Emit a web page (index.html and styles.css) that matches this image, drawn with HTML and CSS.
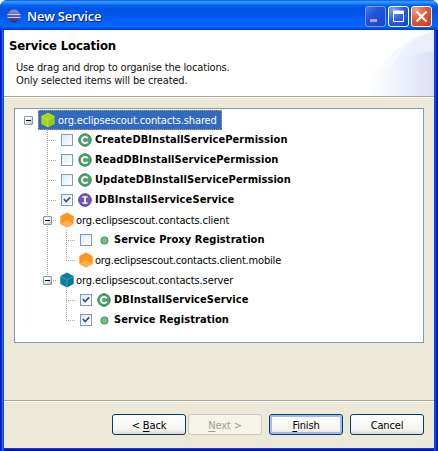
FILE: index.html
```html
<!DOCTYPE html>
<html lang="en">
<head>
<meta charset="utf-8">
<title>New Service</title>
<link rel="stylesheet" href="styles.css">
</head>
<body>
<svg width="0" height="0" class="defs">
  <defs>
    <linearGradient id="orb" x2="0" y2="1"><stop stop-color="#9990cc"/><stop offset="1" stop-color="#332776"/></linearGradient>
    <linearGradient id="swoosh"><stop stop-color="#fff"/><stop offset="1" stop-color="#edf1fb"/></linearGradient>
    <linearGradient id="swoosh2"><stop stop-color="#fff"/><stop offset=".4" stop-color="#f2f5fc"/><stop offset="1" stop-color="#dbe2f6"/></linearGradient>
    <symbol id="hex" viewBox="0 0 14 16">
      <path d="M7 .5 13.700 4v8L7 15.500.3 12V4z" fill="currentColor"/>
      <path d="M7 8 13.700 4v8L7 15.500z" fill="#000" opacity=".07"/>
      <path d="M.5 4.200 7 8l6.500-3.800M7 8v7" fill="none" stroke="#fff" stroke-width=".7" opacity=".38"/>
    </symbol>
    <symbol id="hexo" viewBox="0 0 14 16">
      <path d="M7 .5 13.700 4v8L7 15.500.3 12V4z" fill="#fb971c"/>
      <path d="M1 11.500 7 8l6 3.500L7 15z" fill="#ffb960" opacity=".8"/>
    </symbol>
    <symbol id="cls" viewBox="0 0 14 14">
      <circle cx="7" cy="7" r="6.200" fill="#4fa56a" stroke="#2f7f4c"/>
      <path d="M9.600 5.300A3.100 3.100 0 1 0 9.600 8.700" fill="none" stroke="#fff" stroke-width="1.900"/>
    </symbol>
    <symbol id="ifc" viewBox="0 0 14 14">
      <circle cx="7" cy="7" r="6.300" fill="#7456b0" stroke="#583b98"/>
      <path d="M4.500 4h5M4.500 10h5M7 4v6" fill="none" stroke="#fff" stroke-width="1.700"/>
    </symbol>
    <symbol id="dot" viewBox="0 0 14 14"><circle cx="7.500" cy="7.500" r="3.600" fill="#73bd83" stroke="#3e8a56"/></symbol>
    <symbol id="tick" viewBox="0 0 11 11"><path d="M2 4.500 4.500 7.300 9 2.600" fill="none" stroke="#3f4b86" stroke-width="1.700"/></symbol>
  </defs>
</svg>
<div class="window">
  <div class="titlebar">
    <svg class="logo" viewBox="0 0 14 14"><circle cx="7" cy="7" r="6.500" fill="url(#orb)"/><path d="M.5 5.500h13M.5 8.500h13" stroke="#c6c9ee" stroke-width="1.200"/></svg>
    <span class="caption">New Service</span>
    <span class="cap min"><svg viewBox="0 0 21 21"><path d="M5 13h7v3H5z" fill="#a7a8ec"/></svg></span>
    <span class="cap max"><svg viewBox="0 0 21 21"><path d="M5.500 5h10v10.500h-10z" fill="none" stroke="#fff"/><path d="M5 5h11v3H5z" fill="#fff"/></svg></span>
    <span class="cap close"><svg viewBox="0 0 21 21"><path d="m5.500 5.500 10 10m0-10-10 10" stroke="#fff" stroke-width="2.300"/></svg></span>
  </div>
  <div class="client">
    <header class="banner">
      <svg class="swoosh" viewBox="0 0 74 66"><path d="M0 66C12 40 38 10 74 1v65z" fill="url(#swoosh)"/><path d="M4 66C18 43 42 24 74 21v45z" fill="url(#swoosh2)"/><path d="M31 38C44 16 56 6 74 1v20C57 23 43 29 31 38z" fill="#e6ecfa" opacity=".5"/></svg>
      <h1>Service Location</h1>
      <p class="p1">Use drag and drop to organise the locations.</p>
      <p class="p2">Only selected items will be created.</p>
    </header>
    <main class="body">
      <ul class="tree">
        <li><i class="g"><b class="exp"></b></i><span class="selected"><svg class="hex lime"><use href="#hex"/></svg><span class="label root">org.eclipsescout.contacts.shared</span></span></li>
        <li><i class="g"></i><i class="g v h"></i><span class="check"></span><svg class="ico"><use href="#cls"/></svg><strong>CreateDBInstallServicePermission</strong></li>
        <li><i class="g"></i><i class="g v h"></i><span class="check"></span><svg class="ico"><use href="#cls"/></svg><strong>ReadDBInstallServicePermission</strong></li>
        <li><i class="g"></i><i class="g v h"></i><span class="check"></span><svg class="ico"><use href="#cls"/></svg><strong>UpdateDBInstallServicePermission</strong></li>
        <li><i class="g"></i><i class="g v h"></i><span class="check"><svg><use href="#tick"/></svg></span><svg class="ico"><use href="#ifc"/></svg><strong class="wide">IDBInstallServiceService</strong></li>
        <li><i class="g"></i><i class="g v h"><b class="exp"></b></i><svg class="hex"><use href="#hexo"/></svg><span class="label">org.eclipsescout.contacts.client</span></li>
        <li><i class="g"></i><i class="g v"></i><i class="g v h"></i><span class="check"></span><svg class="ico"><use href="#dot"/></svg><strong>Service Proxy Registration</strong></li>
        <li><i class="g"></i><i class="g v"></i><i class="g v h last"></i><svg class="hex"><use href="#hexo"/></svg><span class="label tight">org.eclipsescout.contacts.client.mobile</span></li>
        <li><i class="g"></i><i class="g v h last"><b class="exp"></b></i><svg class="hex teal"><use href="#hex"/></svg><span class="label">org.eclipsescout.contacts.server</span></li>
        <li><i class="g"></i><i class="g"></i><i class="g v h"></i><span class="check"><svg><use href="#tick"/></svg></span><svg class="ico"><use href="#cls"/></svg><strong>DBInstallServiceService</strong></li>
        <li><i class="g"></i><i class="g"></i><i class="g v h last"></i><span class="check"><svg><use href="#tick"/></svg></span><svg class="ico"><use href="#dot"/></svg><strong>Service Registration</strong></li>
      </ul>
    </main>
    <footer class="actions">
      <button class="btn back">&lt; <u>B</u>ack</button>
      <button class="btn next" disabled><u>N</u>ext &gt;</button>
      <button class="btn finish"><u>F</u>inish</button>
      <button class="btn cancel">Cancel</button>
    </footer>
  </div>
</div>
</body>
</html>
```

FILE: styles.css
```css
* { box-sizing: border-box; }
body { margin: 0; background: #fff; font: 11px/14px "DejaVu Sans Condensed", "DejaVu Sans", sans-serif; font-stretch: condensed; color: #000; overflow: hidden; }
svg { display: block; flex: none; }
.defs { position: absolute; }
.window { width: 438px; height: 451px; padding: 0 4px; display: flex; flex-direction: column; border-radius: 7px 7px 0 0; overflow: hidden;
  background: linear-gradient(90deg, #0010c8 0 1px, #0831d9 1px 2px, #166aee 2px 3px, #0855dd 3px 4px, transparent 4px 434px, #0048f0 434px 436px, #001dca 436px 437px, #00138c 437px), linear-gradient(#0050e8 448px, #0030d0 449px, #00138c 450px); }
.titlebar { height: 30px; margin: 0 -4px; padding: 2px 6px 0 7px; display: flex; align-items: center; flex: none;
  background: linear-gradient(#0058e6 0, #3a93ff 1.500px, #288eff 3px, #0367f0 5px, #0054e3 8px, #0055e5 14px, #0061fc 21px, #0066ff 26px, #005bea 28px, #003dd7 29px, #0042c8 30px); }
.logo { width: 14px; height: 14px; }
.caption { margin-left: 6px; font: 600 13px/16px "Open Sans", sans-serif; letter-spacing: -.2px; color: #fff; text-shadow: 1px 1px #0f1089; margin-right: auto; }
.cap { width: 21px; height: 21px; margin-left: 2px; border: 1px solid #fff; border-radius: 3px; background: radial-gradient(circle at 20% 15%, #7ba4f5, #2f62e4 45%, #0c44cf); }
.cap svg { width: 21px; height: 21px; margin: -1px; }
.min { border-color: #8198ec; background: linear-gradient(135deg, #4b76e8, #2551d8 40%, #1447d2); }
.close { background: radial-gradient(circle at 20% 15%, #f0a088, #e35835 45%, #cc3b12); }
.client { width: 430px; height: 418px; background: #ece9d8; display: flex; flex-direction: column; }
.banner { position: relative; height: 68px; background: #fff; border-bottom: 1px solid #fff; box-shadow: inset 0 -1px #aca899; padding: 8px 0 0 5px; flex: none; }
.swoosh { position: absolute; right: 0; top: 0; width: 74px; height: 66px; }
h1 { margin: 0; font-size: 13px; line-height: 16px; letter-spacing: -.12px; }
p { margin: 0 0 0 7px; line-height: 13px; letter-spacing: -.16px; white-space: nowrap; color: #111; }
.p1 { margin-top: 7px; }
.body { height: 302px; padding: 10px; flex: none; }
.tree { list-style: none; width: 410px; height: 235px; margin: 0; padding: 1px 0 0 4px; border: 1px solid #7f9db9; background: #fff; }
.tree li { height: 20px; display: flex; align-items: center; white-space: nowrap; }
.label { padding-top: 1px; letter-spacing: -.1px; }
.root { margin-left: 1px; letter-spacing: -.13px; }
.tight { letter-spacing: -.18px; }
strong { letter-spacing: .07px; }
.wide { letter-spacing: .12px; }
.g { position: relative; width: 19px; height: 20px; flex: none; }
.v::before { content: ""; position: absolute; left: 9px; top: 0; width: 1px; height: 20px; background: repeating-linear-gradient(#aca899 0 1px, transparent 1px 2px); }
.last::before { height: 11px; }
.h::after { content: ""; position: absolute; left: 9px; top: 10px; width: 9px; height: 1px; background: repeating-linear-gradient(90deg, #aca899 0 1px, transparent 1px 2px); }
.exp { position: absolute; z-index: 1; left: 5px; top: 6px; width: 9px; height: 9px; border: 1px solid #7898b5; border-radius: 1px; background: linear-gradient(#000, #000) 1px 3px / 5px 1px no-repeat, linear-gradient(135deg, #fff 30%, #c7c0b1); }
.hex { width: 14px; height: 16px; margin: 0 2px 0 3px; }
.lime { color: #a5d916; }
.teal { color: #087f9c; }
.selected { height: 20px; width: 184px; display: flex; align-items: center; background: #316ac5; color: #fff; outline: 1px dotted #ce953a; outline-offset: -1px; }
.check { width: 12px; height: 12px; margin: 0 1px 0 4px; border: 1px solid #8299b8; background: linear-gradient(135deg, #dcebf7, #fff); flex: none; }
.check svg { width: 10px; height: 10px; }
.ico { width: 14px; height: 14px; margin: -1px 3px 0 4px; }
.actions { height: 48px; padding: 13px 10px 0 0; border-top: 1px solid #aca899; box-shadow: inset 0 1px #fff; display: flex; justify-content: flex-end; }
.btn { width: 74px; height: 21px; padding: 2px 0 0; font: inherit; letter-spacing: -.15px; color: #000; border: 1px solid #003c74; border-radius: 3px; background: linear-gradient(#fff, #f3f2ec 80%, #dcd7cb); }
.btn u { text-underline-offset: 2px; }
.next { margin-left: 2px; color: #a1a192; border-color: #c9c7ba; background: #f5f4ea; }
.finish { margin-left: 7px; box-shadow: inset 0 0 0 2px #a3baf0; }
.cancel { margin-left: 7px; }
```
